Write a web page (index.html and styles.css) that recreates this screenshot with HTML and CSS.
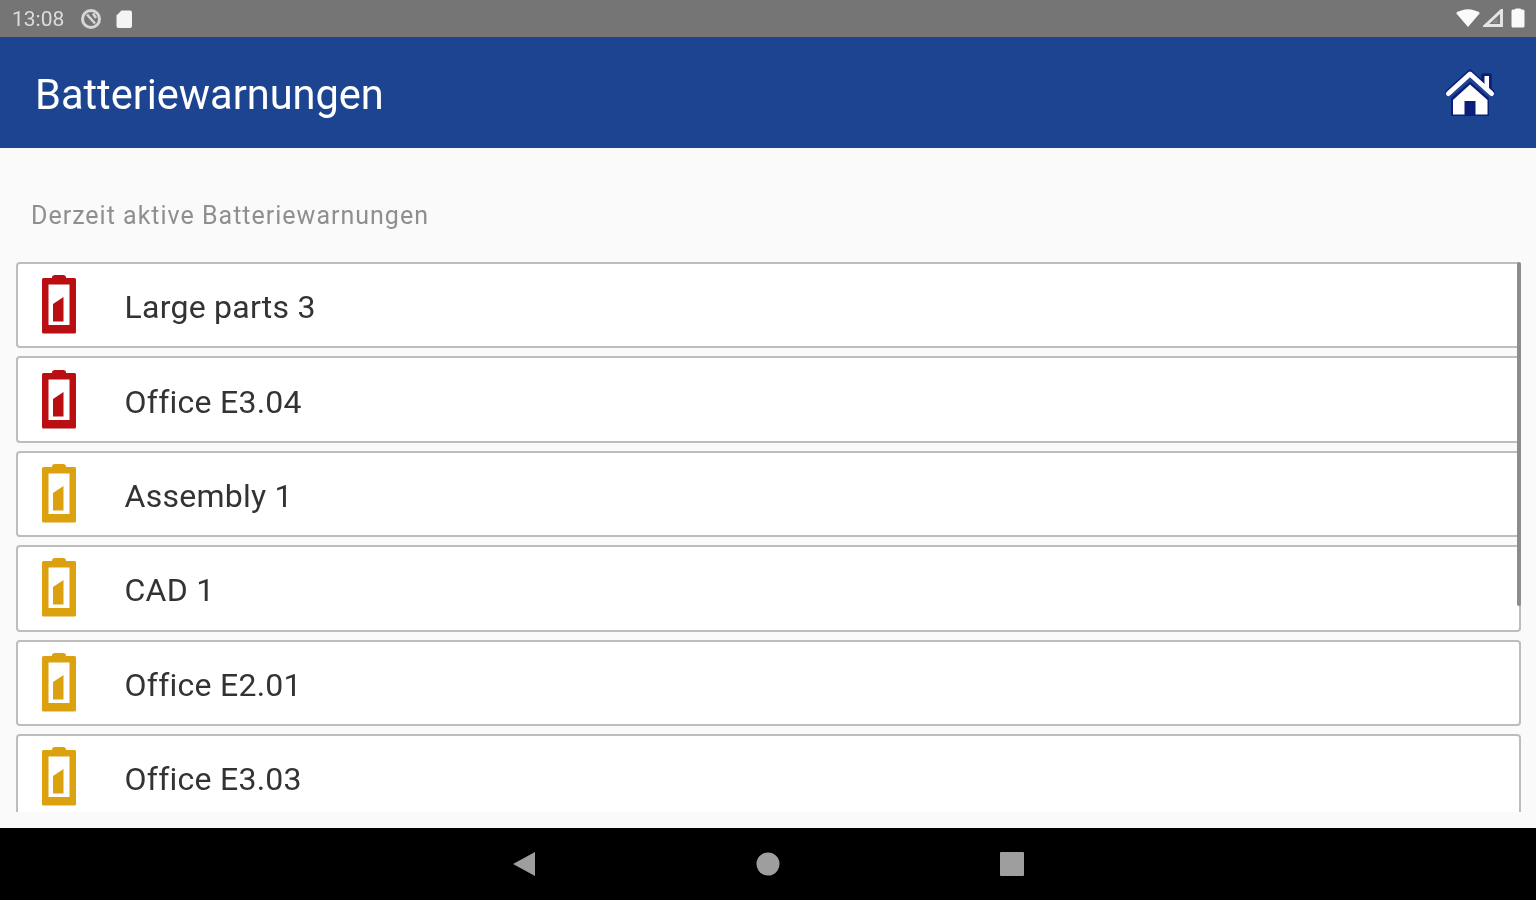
FILE: index.html
```html
<!DOCTYPE html>
<html lang="de">
<head>
<meta charset="utf-8">
<title>Batteriewarnungen</title>
<link rel="stylesheet" href="styles.css">
</head>
<body>
<svg class="defs" width="0" height="0" aria-hidden="true">
  <symbol id="batt" viewBox="0 0 36 60">
    <path fill-rule="evenodd" d="M11 3.500Q11 1 14 1H22Q25 1 25 3.500V4H33.500Q35 4 35 5.500V58Q35 59.500 33.500 59.500H2.500Q1 59.500 1 58V5.500Q1 4 2.500 4H11ZM7.500 10.500V51H28.500V10.500Z"/>
    <path d="M12 30L22.500 23V47.500H12Z"/>
  </symbol>
</svg>
<div class="screen">
  <header class="status">
    <div class="status-left">
      <span class="time">13:08</span>
      <svg class="ic-vpn" width="22" height="22" viewBox="0 0 22 22"><circle cx="11" cy="11" r="8.500" fill="none" stroke="#d6d6d6" stroke-width="3"/><path d="M7 6.500L15 15.500M13 5.500L16 10" stroke="#d6d6d6" stroke-width="2.500" fill="none"/></svg>
      <svg class="ic-sd" width="16" height="18" viewBox="0 0 16 18"><path d="M5.500 0.500H14Q16 0.500 16 2.500V16Q16 18 14 18H2.500Q0.500 18 0.500 16V5.500Z" fill="#f4f4f4"/></svg>
    </div>
    <div class="status-right">
      <svg width="24" height="18" viewBox="0 0 24 18"><path d="M0 4Q12 -3.500 24 4L12 18Z" fill="#fafafa"/></svg>
      <svg width="20" height="18" viewBox="0 0 20 18"><path d="M18.500 1.500V16.500H2.500Z" fill="none" stroke="#e4e4e4" stroke-width="3"/><path d="M14.500 9V14H9.500Z" fill="#8a8a8a"/></svg>
      <svg width="14" height="20" viewBox="0 0 14 20"><path d="M4 1.500Q4 0.500 5 0.500H9Q10 0.500 10 1.500H12Q13.500 1.500 13.500 3V18Q13.500 19.500 12 19.500H2Q0.500 19.500 0.500 18V3Q0.500 1.500 2 1.500Z" fill="#fafafa"/></svg>
    </div>
  </header>
  <div class="appbar">
    <h1 class="title">Batteriewarnungen</h1>
    <svg class="home" width="52" height="50" viewBox="0 0 52 50">
      <path d="M3 24L26 3L39 15V7H46V21L49 24" fill="none" stroke="#0b1f7a" stroke-width="3.500" stroke-linecap="round" stroke-linejoin="round"/>
      <path d="M7 30L26 13.500L45 30V48H7Z" fill="#0b1f7a"/>
      <path d="M4.500 25.500L26 6L47.500 25.500" fill="none" stroke="#fff" stroke-width="5" stroke-linecap="round" stroke-linejoin="round"/>
      <rect x="40.500" y="8" width="4.500" height="13" fill="#fff"/>
      <path d="M26 16.500L43.500 32V46.500H31.500V33H20.500V46.500H9V32Z" fill="#fff"/>
    </svg>
  </div>
  <main class="content">
    <p class="subtitle">Derzeit aktive Batteriewarnungen</p>
    <div class="list-wrap">
      <ul class="list">
        <li class="card"><svg class="batt red"><use href="#batt"/></svg><span class="name">Large parts 3</span></li>
        <li class="card"><svg class="batt red"><use href="#batt"/></svg><span class="name">Office E3.04</span></li>
        <li class="card"><svg class="batt amber"><use href="#batt"/></svg><span class="name">Assembly 1</span></li>
        <li class="card"><svg class="batt amber"><use href="#batt"/></svg><span class="name">CAD 1</span></li>
        <li class="card"><svg class="batt amber"><use href="#batt"/></svg><span class="name">Office E2.01</span></li>
        <li class="card"><svg class="batt amber"><use href="#batt"/></svg><span class="name">Office E3.03</span></li>
      </ul>
      <div class="scrollbar"></div>
    </div>
  </main>
  <nav class="navbar">
    <svg width="24" height="26" viewBox="0 0 24 26"><path d="M1 13L23 1V25Z" fill="#9e9e9e"/></svg>
    <svg width="24" height="24" viewBox="0 0 24 24"><circle cx="12" cy="12" r="11.500" fill="#9e9e9e"/></svg>
    <svg width="24" height="24" viewBox="0 0 24 24"><rect width="24" height="24" rx="1" fill="#9e9e9e"/></svg>
  </nav>
</div>
</body>
</html>
```

FILE: styles.css
```css
* { box-sizing: border-box; }
html, body { margin: 0; padding: 0; }
body { font-family: Roboto, "Liberation Sans", sans-serif; background: #fafafa; }
.defs { display: block; height: 0; }
.screen { width: 1536px; height: 900px; display: flex; flex-direction: column; overflow: hidden; filter: blur(0.6px); }
.status { height: 37px; background: #757575; display: flex; justify-content: space-between; align-items: center; padding: 0 2px 0 12px; flex: none; }
.status-left, .status-right { display: flex; align-items: center; }
.status-left { gap: 16px; }
.status-right { gap: 3px; margin-top: -1px; padding-right: 9px; }
.status-right svg:last-child { margin-left: 5px; }
.time { color: #dcdcdc; font-size: 21px; letter-spacing: 0; }
.ic-sd { margin-left: -2px; }
.appbar { height: 111px; background: #1c4490; display: flex; justify-content: space-between; align-items: center; padding: 0 40px 0 35px; flex: none; }
.title { margin: 4px 0 0; color: #fff; font-size: 41.6px; font-weight: 400; line-height: 1; letter-spacing: -0.03px; }
.content { flex: 1; min-height: 0; background: #fafafa; padding-top: 54px; }
.subtitle { margin: 0 0 32px 31px; height: 28px; line-height: 28px; color: #8f8f8f; font-size: 25px; letter-spacing: 1px; }
.list-wrap { position: relative; height: 550px; margin: 0 15px 0 16px; overflow: hidden; }
.list { list-style: none; margin: 0; padding: 0; display: flex; flex-direction: column; gap: 8px; }
.card { height: 86.4px; flex: none; background: #fff; border: 2px solid #bdbdbd; border-radius: 4px; display: flex; align-items: center; padding-left: 23px; }
.batt { width: 36px; height: 60px; flex: none; margin-top: -2px; }
.red { fill: #b90e12; }
.amber { fill: #dca10e; }
.name { margin: 4px 0 0 47.5px; color: #333; font-size: 32px; letter-spacing: 0.25px; }
.scrollbar { position: absolute; top: 0; right: 0; width: 4px; height: 344px; background: #8c8c8c; border-radius: 2px; }
.navbar { height: 72px; background: #000; flex: none; display: flex; align-items: center; padding-left: 512px; gap: 220px; }
```
